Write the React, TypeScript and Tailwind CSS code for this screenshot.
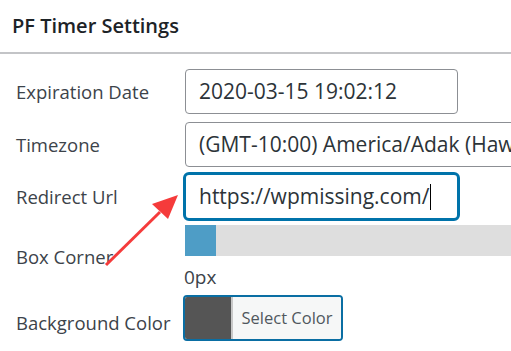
import React from "react";

const Label = ({ children, w = "w-[169px]", extra = "" }: { children: React.ReactNode; w?: string; extra?: string }) => (
  <div className={`${w} shrink-0 text-[18.5px] text-[#3c434a] whitespace-nowrap ${extra}`}>{children}</div>
);

const App = () => {
  return (
    <div className="relative w-[511px] h-[351px] overflow-hidden bg-white font-['Open_Sans',sans-serif] text-[#3c434a]">
      {/* header */}
      <div className="h-[54px] border-b-2 border-[#c3c4c7] pl-3 flex items-center">
        <h2 className="text-[20px] font-semibold text-[#1d2327]">PF Timer Settings</h2>
      </div>

      <div className="pl-4 pt-[15px]">
        {/* expiration */}
        <div className="flex items-center h-[45px]">
          <Label extra="pt-px">Expiration Date</Label>
          <div className="w-[273px] h-[45px] shrink-0 border border-[#8c8f94] rounded-[4px] px-[13px] flex items-center text-[21px] text-[#2c3338]">
            2020-03-15 19:02:12
          </div>
        </div>

        {/* timezone */}
        <div className="flex items-center h-[45px] mt-2">
          <Label>Timezone</Label>
          <div className="w-[340px] h-[45px] shrink-0 border border-[#8c8f94] rounded-[4px] px-[13px] flex items-center text-[21px] text-[#2c3338] whitespace-nowrap overflow-hidden">
            (GMT-10:00) America/Adak (Haw
          </div>
        </div>

        {/* redirect */}
        <div className="flex items-center h-[49px] mt-[5px]">
          <Label w="w-[167px]">Redirect Url</Label>
          <div className="w-[277px] h-[49px] shrink-0 border-[3px] border-[#0073aa] rounded-[6px] px-[13px] flex items-center text-[21px] text-[#2c3338]">
            https://wpmissing.com/
            <span className="inline-block w-px h-[26px] bg-black ml-px" />
          </div>
        </div>

        {/* box corner */}
        <div className="flex mt-[4px]">
          <Label>
            <div className="pt-[18px]">Box Corner</div>
          </Label>
          <div className="flex-1">
            <div className="flex h-[31px] bg-[#dedede]">
              <div className="w-[31px] h-[31px] bg-[#4e9dc6]" />
            </div>
            <div className="mt-[7px] text-[19px] leading-[28px] text-[#3c434a] -ml-px">0px</div>
          </div>
        </div>

        {/* background color */}
        <div className="flex items-center h-[46px] mt-[4px]">
          <Label w="w-[167px]" extra="pt-[9px]">Background Color</Label>
          <div className="flex h-[46px] w-[160px] shrink-0 border-2 border-[#0a6ea3] rounded-[4px] overflow-hidden">
            <div className="w-[46px] bg-[#555555]" />
            <div className="w-[2px] bg-[#c8c8c8]" />
            <div className="flex-1 bg-[#f6f7f7] flex items-center justify-center text-[16.5px] text-[#50575e]">
              Select Color
            </div>
          </div>
        </div>
      </div>

      {/* red annotation arrow */}
      <svg className="absolute left-0 top-0 pointer-events-none" width="511" height="351">
        <line x1="106" y1="265" x2="160" y2="212" stroke="#f53b3b" strokeWidth="3" />
        <polygon points="178,195 168,219 152,204" fill="#f53b3b" />
      </svg>
    </div>
  );
};

export default App;
